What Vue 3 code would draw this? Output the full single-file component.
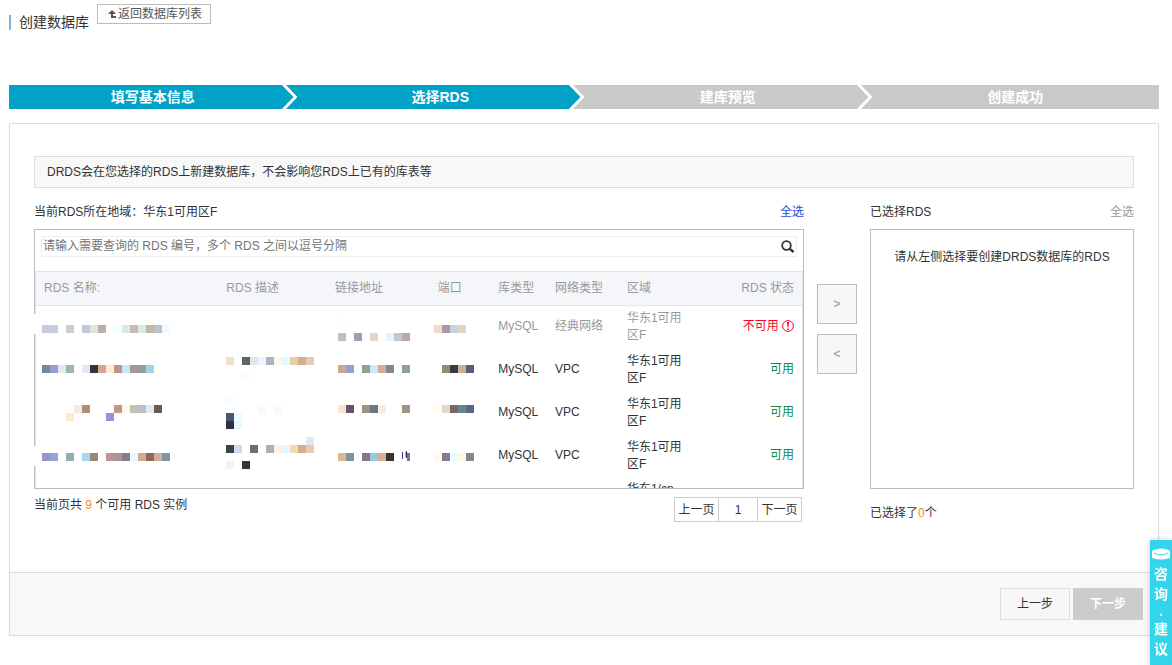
<script setup>
import { ref } from 'vue'

const steps = [
  { label: '填写基本信息', on: true, next: 'on' },
  { label: '选择RDS', on: true, next: 'off' },
  { label: '建库预览', on: false, next: 'off' },
  { label: '创建成功', on: false, next: '' },
]

const query = ref('')

// Masked values: each strip is [x, y, colours], one 8px block per colour, '-' leaves a gap.
const rows = [
  {
    off: true,
    name: [[-2, 19, 'c5cbdb c8cddd - cccdce - bec9d9 e6e2dc bab0a5 - f0ffff d8eae8 c9bbaf d8eae8 c4b6a5 bec0ce f0fcff']],
    desc: [],
    addr: [[3, 11, 'f8ffff'], [3, 27, 'c5bfc1 - 9ea0ae - e5d2ca - e1f6fa c6c7ca b9aaa9']],
    port: [[-4, 19, 'f0dcce a99ba5 c6d2e2 ddd5c5']],
    net: '经典网络',
    region: '华东1可用区F',
  },
  {
    name: [[-2, 17, '748a98 95a0d2 e4e7ec 98b6b6 - dfe8f8 3c3432 d4a890 fdebd3 c09488 cde4f8 aa9499 92a09a a8cfe5']],
    desc: [[0, 9, 'f1dfca - 606462 dceaf0 f0f3ff aab5bc fff9e8 e4f8ff e8cda8 d4ae94 e8cbb0'], [16, 25, 'f9fcff']],
    addr: [[3, 17, 'd0a493 959fd0 - 8fa098 cfe9fb d3ae94 87868c - 8fa29b']],
    port: [[4, 17, '958a76 343d3b c9b294 5c5d7a']],
    net: 'VPC',
    region: '华东1可用区F',
  },
  {
    name: [[30, 14, 'f1eae5 a99172 - - - c3968a fff8e4 c3c1b0 bebdc8 e2eaf5 6f5950'], [22, 22, 'fdebd1 - - - - 9598d0']],
    desc: [[0, 6, 'f9fcff'], [32, 14, 'f8f8ff - f8f8ff'], [0, 22, '475970 ecfdff'], [0, 30, '322f45 e4f8ff']],
    addr: [[3, 14, 'f5e6cd 665468 - a09080 667883 fbecd8 - - a29282']],
    port: [[-4, 14, 'fffcee e2d8cf 756a5c 69858c 5a6888']],
    net: 'VPC',
    region: '华东1可用区F',
  },
  {
    name: [[-2, 19, '9598d0 95a2d2 - 94adb2 - aad5f2 958a76 - bc9590 aa949a 827e87 e8faff d3aa92 8e6a5a d8ab97 8094ab']],
    desc: [[80, 3, 'e2e7f2'], [0, 11, '3a4547 ccddf2 - 6a6c6f - a6b2b7 fff3df e4f8ff efd8b4 d4ae94 e8cbb0'], [0, 27, 'f4f4f4 - 33343e']],
    addr: [[3, 19, 'dab794 8092a0 - 8a7488 98c8e6 d4ae95 3a3230']],
    slivers: true,
    port: [[-4, 19, 'fff9ea 847a8e e9fdff fff9df 87868c']],
    net: 'VPC',
    region: '华东1可用区F',
  },
]

const maskCols = ['name', 'desc', 'addr', 'port']

const blocks = (strips) =>
  strips.flatMap(([x, y, line]) =>
    line.split(' ').map((c, i) => ({ x: x + i * 8, y, c })).filter((b) => b.c !== '-')
      .map((b) => ({ ...b, c: '#' + b.c })))
</script>

<template>
  <div class="page">
    <header class="head">
      <h1>创建数据库</h1>
      <button type="button" class="back">
        <svg width="9" height="10" viewBox="0 0 9 10" aria-hidden="true">
          <path d="M4 1 L8 5 H5 V7 H8 V9 H3 V5 H0 Z" fill="#555" />
        </svg>返回数据库列表
      </button>
    </header>

    <ol class="steps">
      <li v-for="s in steps" :key="s.label" :class="{ on: s.on }">
        {{ s.label }}
        <svg v-if="s.next" class="arrow" width="16" height="24" viewBox="0 0 16 24" aria-hidden="true">
          <path d="M2 0 H16 V24 H2 L14 12 Z" :class="s.next" />
          <path d="M2 -1 L14.5 12 L2 25" fill="none" stroke="#fff" stroke-width="3" />
        </svg>
      </li>
    </ol>

    <main class="card">
      <div class="body">
        <p class="notice">DRDS会在您选择的RDS上新建数据库，不会影响您RDS上已有的库表等</p>
        <div class="transfer">
          <section class="source">
            <div class="caption">
              <span>当前RDS所在地域：华东1可用区F</span>
              <a href="#" class="all">全选</a>
            </div>
            <div class="panel left">
              <div class="scroll">
                <div class="search">
                  <input v-model="query" type="text" aria-label="查询 RDS 编号" placeholder="请输入需要查询的 RDS 编号，多个 RDS 之间以逗号分隔" />
                  <button type="button" aria-label="搜索">
                    <svg width="14" height="14" viewBox="0 0 14 14" aria-hidden="true">
                      <circle cx="5.5" cy="5.5" r="4.3" fill="none" stroke="#333" stroke-width="1.8" />
                      <path d="M8.8 8.8 L12.6 12" stroke="#333" stroke-width="2.4" />
                    </svg>
                  </button>
                </div>
                <table>
                  <colgroup>
                    <col class="c-name" /><col class="c-desc" /><col class="c-addr" /><col class="c-port" />
                    <col class="c-type" /><col class="c-net" /><col class="c-region" /><col class="c-state" />
                  </colgroup>
                  <thead>
                    <tr>
                      <th>RDS 名称:</th>
                      <th>RDS 描述</th>
                      <th>链接地址</th>
                      <th>端口</th>
                      <th>库类型</th>
                      <th>网络类型</th>
                      <th>区域</th>
                      <th class="state">RDS 状态</th>
                    </tr>
                  </thead>
                  <tbody>
                    <tr v-for="(r, i) in rows" :key="i" :class="{ off: r.off }">
                      <td v-for="k in maskCols" :key="k" class="mask">
                        <svg width="8" height="42" aria-hidden="true" shape-rendering="crispEdges">
                          <rect v-for="(b, j) in blocks(r[k])" :key="j" :x="b.x" :y="b.y" width="8" height="8" :fill="b.c" />
                          <g v-if="k === 'addr' && r.slivers">
                            <rect x="67" y="18" width="1" height="7" fill="#33419a" />
                            <rect x="70" y="18" width="1" height="5" fill="#e6a04c" />
                            <rect x="71" y="17" width="1" height="7" fill="#2a2f75" />
                            <rect x="72" y="19" width="3" height="8" fill="#8a7488" />
                          </g>
                        </svg>
                      </td>
                      <td>MySQL</td>
                      <td>{{ r.net }}</td>
                      <td class="region">{{ r.region }}</td>
                      <td class="state">
                        <span v-if="r.off" class="bad">不可用
                          <svg width="12" height="12" viewBox="0 0 12 12" aria-hidden="true">
                            <circle cx="6" cy="6" r="5.4" fill="none" stroke="#ff0030" />
                            <path d="M5 2 H7 L6.5 7.5 H5.5 Z M5.2 8.4 H6.8 V10 H5.2 Z" fill="#ff0030" />
                          </svg>
                        </span>
                        <span v-else class="good">可用</span>
                      </td>
                    </tr>
                    <tr>
                      <td></td><td></td><td></td><td></td><td></td><td></td>
                      <td class="region last">华东1/cn</td>
                      <td></td>
                    </tr>
                  </tbody>
                </table>
              </div>
            </div>
            <div class="under">
              <span>当前页共 <b>9</b> 个可用 RDS 实例</span>
              <nav class="pager" aria-label="分页">
                <button type="button">上一页</button>
                <button type="button" class="num">1</button>
                <button type="button">下一页</button>
              </nav>
            </div>
          </section>

          <div class="moves">
            <button type="button" aria-label="添加">&gt;</button>
            <button type="button" aria-label="移除">&lt;</button>
          </div>

          <section class="target">
            <div class="caption">
              <span>已选择RDS</span>
              <a href="#" class="all muted">全选</a>
            </div>
            <div class="panel empty">请从左侧选择要创建DRDS数据库的RDS</div>
            <p class="count">已选择了<b>0</b>个</p>
          </section>
        </div>
      </div>
      <footer class="foot">
        <button type="button">上一步</button>
        <button type="button" class="next" disabled>下一步</button>
      </footer>
    </main>

    <a href="#" class="advice">
      <svg width="18" height="12" viewBox="0 0 18 12" aria-hidden="true">
        <path d="M1 2 Q9 -1 17 2 L18 4 V10 Q9 13 0 10 V4 Z" fill="#fff" />
        <path d="M2 5 Q9 9 16 5" fill="none" stroke="#32d5ea" />
      </svg>
      <span>咨</span><span>询</span><span class="dot">.</span><span>建</span><span>议</span>
    </a>
  </div>
</template>

<style>
body {
  margin: 0;
  background: #fff;
  overflow: hidden;
}
</style>

<style scoped>
.page {
  padding: 0 13px 0 9px;
  font: 12px/17px "Liberation Sans", "Noto Sans CJK SC", sans-serif;
  color: #333;
}
.page * {
  box-sizing: border-box;
}
button,
input {
  font: inherit;
  color: inherit;
  margin: 0;
  padding: 0;
}
b {
  font-weight: normal;
  color: #f68b1f;
}
.head {
  display: flex;
  align-items: flex-start;
  gap: 8px;
  height: 85px;
  padding-top: 4px;
}
h1 {
  margin: 11px 0 0;
  padding-left: 8px;
  border-left: 2px solid #7fb2dc;
  font-size: 14px;
  line-height: 15px;
  font-weight: normal;
}
.back {
  height: 20px;
  padding: 0 8px 0 10px;
  border: 1px solid #bbb;
  background: #fff;
  color: #555;
  line-height: 18px;
  white-space: nowrap;
}
.back svg {
  margin-right: 1px;
  vertical-align: -1px;
}
.steps {
  display: flex;
  margin: 0 0 14px;
  padding: 0;
  list-style: none;
}
.steps li {
  position: relative;
  flex: 1;
  height: 24px;
  background: #c9c9c9;
  color: #fff;
  font-size: 14px;
  font-weight: bold;
  line-height: 24px;
  text-align: center;
}
.steps li.on {
  background: #00a2c8;
}
.arrow {
  position: absolute;
  top: 0;
  right: 0;
}
.arrow .on {
  fill: #00a2c8;
}
.arrow .off {
  fill: #c9c9c9;
}
.card {
  border: 1px solid #ddd;
  box-shadow: 0 1px 1px #eee;
}
.body {
  padding: 32px 24px 50px;
}
.notice {
  margin: 0 0 14px;
  padding: 0 12px;
  border: 1px solid #ddd;
  background: #f8f8f8;
  line-height: 30px;
}
.transfer {
  display: flex;
  gap: 13px;
}
.source {
  flex: 1;
  min-width: 0;
}
.target {
  flex: 0 0 264px;
}
.caption {
  display: flex;
  justify-content: space-between;
  height: 27px;
  line-height: 21px;
}
.all {
  color: #1a4fd0;
  text-decoration: none;
}
.all.muted {
  color: #999;
}
.panel {
  position: relative;
  height: 260px;
  border: 1px solid #bbb;
}
.left::before,
.left::after {
  content: "";
  position: absolute;
  left: -1px;
  top: 84px;
  width: 3px;
  height: 20px;
  background: #fff;
}
.left::after {
  top: 216px;
}
.scroll {
  height: 100%;
  overflow: hidden;
}
.search {
  display: flex;
  align-items: center;
  height: 21px;
  margin: 6px 6px 14px;
  border: 1px solid #eee;
}
.search input {
  flex: 1;
  height: 19px;
  padding: 0 1px 2px;
  border: 0;
  background: transparent;
  outline: 0;
}
.search input::placeholder {
  color: #757575;
  opacity: 1;
}
.search button {
  width: 17px;
  height: 19px;
  border: 0;
  background: none;
}
.search svg {
  display: block;
  margin: 1px 2px 0;
}
table {
  width: 100%;
  table-layout: fixed;
  border-collapse: separate;
  border-spacing: 0;
  border: solid #e1e6eb;
  border-width: 1px 1px 0;
}
.c-name { width: 23.8%; }
.c-desc { width: 14.2%; }
.c-addr { width: 13.4%; }
.c-port { width: 7.9%; }
.c-type { width: 7.4%; }
.c-net { width: 9.4%; }
.c-region { width: 11.7%; }
.c-state { width: 12.2%; }
th {
  height: 34px;
  padding: 0 8px;
  border-bottom: 1px solid #e1e3eb;
  background: #f5f6fa;
  color: #999;
  font-weight: normal;
  text-align: left;
  white-space: nowrap;
}
td {
  height: 43px;
  padding: 0 8px;
}
.off td {
  height: 42px;
  padding-bottom: 1px;
}
td.mask {
  padding: 0 0 0 8px;
  vertical-align: top;
}
td.mask svg {
  display: block;
  overflow: visible;
}
td.region {
  padding-right: 20px;
}
td.last {
  padding-top: 4px;
  vertical-align: top;
}
.state {
  text-align: right;
  white-space: nowrap;
}
.off {
  color: #999;
}
.bad {
  color: #ff0030;
}
.bad svg {
  vertical-align: -2px;
}
.good {
  color: #118c45;
}
.under {
  display: flex;
  justify-content: space-between;
  padding: 8px 2px 0 0;
}
.pager {
  display: flex;
}
.pager button {
  width: 45px;
  height: 25px;
  padding-top: 1px;
  border: 1px solid #ccc;
  background: #fff;
}
.pager .num {
  width: 40px;
  margin: 0 -1px;
}
.moves {
  display: flex;
  flex-direction: column;
  gap: 10px;
  padding-top: 82px;
}
.moves button {
  width: 40px;
  height: 40px;
  border: 1px solid #bbb;
  background: #f7f7f7;
  color: #aaa;
  font-weight: bold;
}
.empty {
  padding: 19px 10px;
  text-align: center;
}
.count {
  margin: 16px 0 0;
}
.foot {
  display: flex;
  justify-content: flex-end;
  gap: 3px;
  padding: 15px;
  border-top: 1px solid #ddd;
  background: #f8f8f8;
}
.foot button {
  width: 70px;
  height: 32px;
  border: 1px solid #ddd;
  background: #f7f7f7;
}
.foot .next {
  border-color: #ccc;
  background: #ccc;
  color: #fff;
  font-weight: bold;
}
.advice {
  position: fixed;
  right: 0;
  bottom: 0;
  display: flex;
  flex-direction: column;
  align-items: center;
  width: 22px;
  padding: 8px 0 6px;
  background: #32d5ea;
  box-shadow: 0 0 6px rgba(0, 0, 0, 0.2);
  color: #fff;
  font-size: 14px;
  font-weight: bold;
  line-height: 20px;
  text-decoration: none;
}
.advice svg {
  margin-bottom: 4px;
}
.advice .dot {
  line-height: 15px;
}
</style>
